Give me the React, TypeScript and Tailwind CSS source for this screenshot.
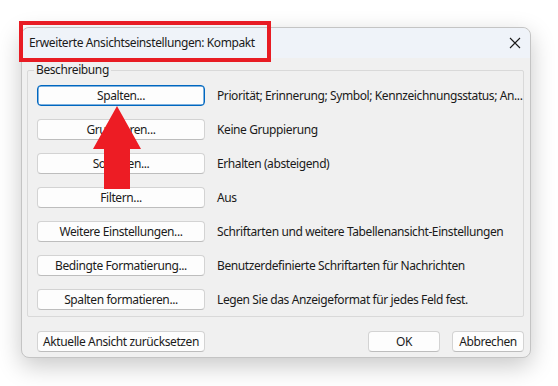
import React from 'react';

const ROWS = [
  { label: 'Spalten...', text: 'Priorität; Erinnerung; Symbol; Kennzeichnungsstatus; An...', focused: true },
  { label: 'Gruppieren...', text: 'Keine Gruppierung' },
  { label: 'Sortieren...', text: 'Erhalten (absteigend)' },
  { label: 'Filtern...', text: 'Aus' },
  { label: 'Weitere Einstellungen...', text: 'Schriftarten und weitere Tabellenansicht-Einstellungen' },
  { label: 'Bedingte Formatierung...', text: 'Benutzerdefinierte Schriftarten für Nachrichten' },
  { label: 'Spalten formatieren...', text: 'Legen Sie das Anzeigeformat für jedes Feld fest.' },
];

function WinButton({ children, focused, className = '' }: { children: React.ReactNode; focused?: boolean; className?: string }) {
  return (
    <button
      className={`h-[21px] rounded-[4px] bg-[#fdfdfd] text-[12px] leading-none text-[#1b1b1b] tracking-[-0.4px] flex items-center justify-center whitespace-nowrap ${
        focused
          ? 'border border-[#0067c0] shadow-[inset_0_0_0_0.5px_#0067c0]'
          : 'border border-[#d3d3d3] border-b-[#bdbdbd]'
      } ${className}`}
    >
      {children}
    </button>
  );
}

export default function App() {
  return (
    <div
      className="w-[558px] h-[386px] bg-white pt-[27px] pl-[21px] relative overflow-hidden"
      style={{ fontFamily: '"Noto Sans", "Open Sans", sans-serif' }}
    >
      <div className="relative w-[510px] h-[331px] rounded-[8px] border border-[#c4c4c4] bg-[#f0f0f0] shadow-[0_8px_24px_rgba(0,0,0,0.22)] flex flex-col">
        {/* title bar */}
        <div className="h-[30px] rounded-t-[8px] bg-[#eff3f9] flex items-center justify-between pl-[7px] pr-[8px]">
          <span className="text-[12px] text-[#1a1a1a] tracking-[-0.4px]">Erweiterte Ansichtseinstellungen: Kompakt</span>
          <svg width="12" height="12" viewBox="0 0 12 12" className="mr-[1px]">
            <path d="M1 1 L11 11 M11 1 L1 11" stroke="#1a1a1a" strokeWidth="1.1" />
          </svg>
        </div>

        {/* red highlight box around title */}
        <div className="absolute left-[-3px] top-[-7px] w-[252px] h-[41px] border-[4px] border-[#e81c24]" />

        {/* group box */}
        <div className="relative mt-[12px] ml-[5px] mr-[6px] h-[247px] border border-[#d9d9d9] rounded-[2px] pt-[14px] pl-[9px] flex flex-col gap-[13px]">
          <span className="absolute left-[6px] top-[-8px] bg-[#f0f0f0] px-[2px] text-[12px] leading-[14px] text-[#1a1a1a] tracking-[-0.4px]">
            Beschreibung
          </span>
          {ROWS.map((row) => (
            <div key={row.label} className="flex items-center gap-[12px]">
              <WinButton focused={row.focused} className="w-[168px] shrink-0">
                {row.label}
              </WinButton>
              <span className="text-[12px] text-[#1a1a1a] whitespace-nowrap tracking-[-0.4px]">{row.text}</span>
            </div>
          ))}
        </div>

        {/* bottom buttons */}
        <div className="mt-[14px] pl-[15px] pr-[6px] flex items-center">
          <WinButton className="w-[168px]">Aktuelle Ansicht zurücksetzen</WinButton>
          <div className="ml-auto flex gap-[12px]">
            <WinButton className="w-[72px]">OK</WinButton>
            <WinButton className="w-[72px]">Abbrechen</WinButton>
          </div>
        </div>
      </div>

      {/* red arrow */}
      <svg className="absolute left-[92px] top-[106px]" width="50" height="84" viewBox="0 0 50 84">
        <polygon points="25,0 49,43 38,43 38,83 12,83 12,43 1,43" fill="#ed1c24" />
      </svg>
    </div>
  );
}
